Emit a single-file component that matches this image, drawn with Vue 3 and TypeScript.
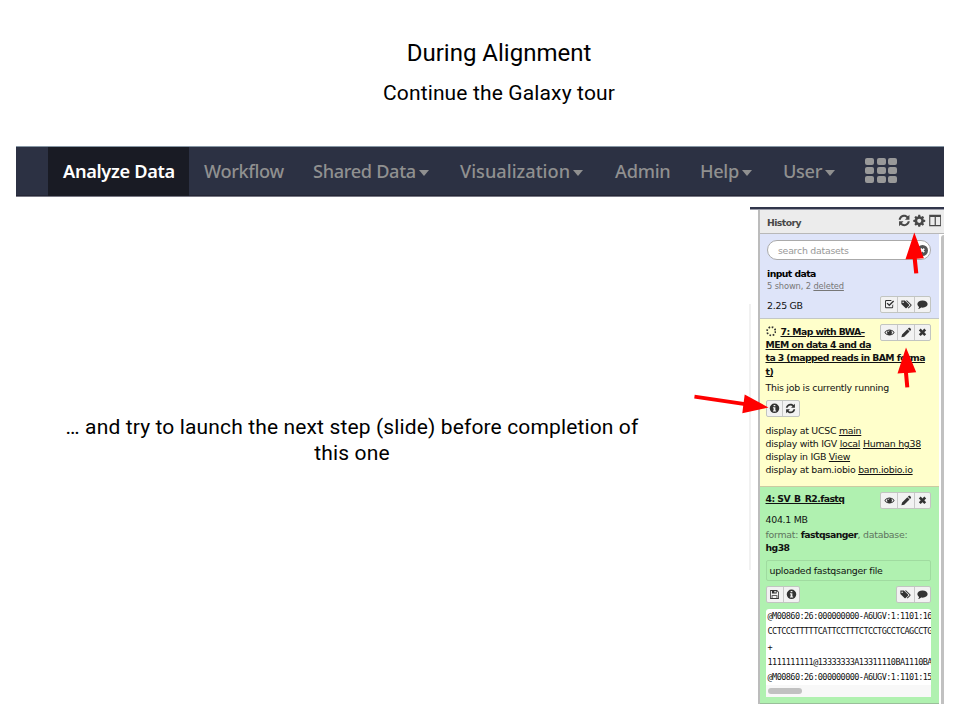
<script setup lang="ts">
import { h, type FunctionalComponent } from 'vue'

interface NavItem { label: string; key: string; menu?: boolean; active?: boolean }

const nav: NavItem[] = [
  { label: 'Analyze Data', key: 'analyze', active: true },
  { label: 'Workflow', key: 'workflow' },
  { label: 'Shared Data', key: 'shared', menu: true },
  { label: 'Visualization', key: 'visualization', menu: true },
  { label: 'Admin', key: 'admin' },
  { label: 'Help', key: 'help', menu: true },
  { label: 'User', key: 'user', menu: true },
]

const icons: Record<string, string> = {
  refresh: 'M.6 6.600C1 3.300 3.800 1 7 1c1.700 0 3.200.7 4.300 1.700L13 1v5.500H7.800l1.900-1.900C9 3.900 8.100 3.300 7 3.300c-2 0-3.600 1.400-4 3.300zM13.400 8.400C13 11.700 10.200 14 7 14c-1.700 0-3.200-.7-4.300-1.700L1 14V8.500h5.200l-1.900 1.900c.7.700 1.600 1.300 2.700 1.300 2 0 3.600-1.400 4-3.300z',
  gear: 'M5.900 1h2.200l.4 1.800 1 .4L11 2.200 12.600 3.800l-1 1.600.4 1 1.900.4v2.200l-1.900.4-.4 1 1 1.500-1.600 1.600-1.500-1-1 .4-.4 1.900H5.900l-.4-1.900-1-.4-1.500 1L1.400 11.900l1-1.500-.4-1L.1 9V6.800L2 6.400l.4-1-1-1.600L3 2.200l1.500 1 1-.4zM7 5.500a2.400 2.400 0 100 4.800 2.400 2.400 0 000-4.800z',
  columns: 'M0 1h14v13H0zM1.300 3.500v9.200h5V3.500zM7.700 3.500v9.200h5V3.500z',
  check: 'M2.500 1.500h7.700l-1.300 1.300H3c-.5 0-.8.300-.8.800v7c0 .5.300.8.800.8h7c.5 0 .8-.3.800-.8V8.500L12 7.300v3.500c0 1.100-.8 1.900-1.900 1.900H2.800C1.700 12.700.9 11.900.9 10.800V3.400c0-1.100.700-1.900 1.600-1.900zM3 6.200l1.300-1.200 2.400 2.300L12 2l1.300 1.300-6.600 6.600z',
  tags: 'M0 2h4.800l5.600 5.600c.5.500.5 1.100 0 1.600l-3.200 3.200c-.5.500-1.100.5-1.600 0L0 6.800zM2.400 3.400a1.100 1.100 0 100 2.200 1.100 1.100 0 000-2.200zM6.100 2h1.800l5.700 5.600c.5.500.5 1.100 0 1.600L9.800 12.900l-.9-.8 3.300-3.300c.3-.3.300-.6 0-.9z',
  comment: 'M7 2c4 0 7 2.100 7 4.900s-3 4.900-7 4.900c-.6 0-1.200 0-1.700-.1C4 12.900 2.400 13.700.9 13.800c.9-.9 1.400-1.900 1.400-3C.9 9.900 0 8.500 0 6.900 0 4.100 3 2 7 2z',
  eye: 'M0 7.500C1.700 4.900 4.200 3.300 7 3.300s5.300 1.600 7 4.200c-1.700 2.600-4.200 4.200-7 4.200S1.700 10.100 0 7.500zM1.400 7.500c1 1.400 2.200 2.400 3.600 2.800A3.600 3.600 0 015 4.700c-1.400.4-2.600 1.400-3.600 2.800zM9 4.700a3.600 3.600 0 010 5.600c1.400-.4 2.600-1.400 3.600-2.800-1-1.400-2.200-2.400-3.600-2.800zM7 4.700A2 2 0 005 6.700h.8c0-.7.5-1.200 1.200-1.200z',
  pencil: 'M1 10.300L8.200 3.100l2.900 2.900L3.900 13.200 0 14.100zM8.900 2.400l1-1c.6-.6 1.300-.6 1.900 0l1 1c.6.6.6 1.300 0 1.900l-1 1z',
  close: 'M2 4.700L4.500 2.200 7 4.800l2.500-2.600L12 4.700 9.400 7.300 12 9.900l-2.500 2.500L7 9.800l-2.500 2.600L2 9.900l2.600-2.600z',
  info: 'M7 .8a6.500 6.500 0 100 13 6.500 6.500 0 000-13zM5.800 2.600h2.400v2H5.800zM4.900 5.700h3.300v4.400h1v1.600H4.900v-1.600h.9V7.200h-.9z',
  save: 'M1 1.500h9.500L13 4v9.500H1zM2.100 2.600v9.800h1V8.500h7.800v3.900h1V4.500L10 2.600V6H3.500V2.600zM6.800 2.600v2.300h2V2.600zM4.200 9.600v2.800h5.600V9.600z',
}

const Icon: FunctionalComponent<{ name: string }> = (props) =>
  h('svg', { viewBox: '0 0 14 15', 'aria-hidden': 'true' }, [
    h('path', { d: icons[props.name], fill: 'currentColor', 'fill-rule': 'evenodd' }),
  ])
Icon.props = ['name']

const sequence: string[] = [
  '@M00860:26:000000000-A6UGV:1:1101:16',
  'CCTCCCTTTTTCATTCCTTTCTCCTGCCTCAGCCTG',
  '+',
  '1111111111@13333333A13311110BA1110BA',
  '@M00860:26:000000000-A6UGV:1:1101:15',
]
</script>

<template>
  <main class="slide">
    <header class="heading">
      <h1>During Alignment</h1>
      <h2>Continue the Galaxy tour</h2>
    </header>

    <nav class="masthead">
      <a v-for="item in nav" :key="item.key" :class="['item', item.key, { active: item.active }]">
        <span>{{ item.label }}</span><i v-if="item.menu" class="caret"></i>
      </a>
      <div class="apps"><i v-for="n in 9" :key="n"></i></div>
    </nav>

    <div class="body">
      <p class="note">… and try to launch the next step (slide) before completion of<br>this one</p>
      <div class="gutter"></div>

      <section class="history">
        <div class="topline"></div>
        <div class="frame">
          <div class="title-bar">
            <b>History</b>
            <span class="tools"><Icon name="refresh" /><Icon name="gear" /><Icon name="columns" /></span>
          </div>
          <div class="scroller">
            <div class="content">
              <div class="summary">
                <div class="search"><span>search datasets</span><i class="clear"><Icon name="close" /></i></div>
                <b class="name">input data</b>
                <div class="count">5 shown, 2 <u>deleted</u></div>
                <div class="size-row">
                  <span>2.25 GB</span>
                  <span class="buttons"><i><Icon name="check" /></i><i><Icon name="tags" /></i><i><Icon name="comment" /></i></span>
                </div>
              </div>

              <article class="dataset running">
                <div class="dataset-head">
                  <b class="title"><svg class="spinner" viewBox="0 0 12 12" aria-hidden="true"><circle cx="6" cy="6" r="4.800" /></svg><u>7: Map with BWA–</u><br><u>MEM on data 4 and da</u></b>
                  <span class="buttons"><i><Icon name="eye" /></i><i><Icon name="pencil" /></i><i><Icon name="close" /></i></span>
                </div>
                <b class="title rest"><u>ta 3 (mapped reads in BAM forma</u><br><u>t)</u></b>
                <p class="state">This job is currently running</p>
                <span class="buttons"><i><Icon name="info" /></i><i><Icon name="refresh" /></i></span>
                <div class="links">
                  <div>display at UCSC <u>main</u></div>
                  <div>display with IGV <u>local</u> <u>Human hg38</u></div>
                  <div>display in IGB <u>View</u></div>
                  <div>display at bam.iobio <u>bam.iobio.io</u></div>
                </div>
              </article>

              <article class="dataset ok">
                <div class="dataset-head">
                  <b class="title"><u>4: SV_B_R2.fastq</u></b>
                  <span class="buttons"><i><Icon name="eye" /></i><i><Icon name="pencil" /></i><i><Icon name="close" /></i></span>
                </div>
                <div class="size">404.1 MB</div>
                <div class="meta">format: <b>fastqsanger</b>, database:<br><b>hg38</b></div>
                <div class="info-box">uploaded fastqsanger file</div>
                <div class="action-row">
                  <span class="buttons"><i><Icon name="save" /></i><i><Icon name="info" /></i></span>
                  <span class="buttons"><i><Icon name="tags" /></i><i><Icon name="comment" /></i></span>
                </div>
                <div class="peek">
                  <div v-for="line in sequence" :key="line" class="line">{{ line }}</div>
                  <div class="track"><i></i></div>
                </div>
              </article>
            </div>
            <div class="scrollbar"></div>
          </div>
        </div>
      </section>
    </div>

    <svg class="arrows" viewBox="0 0 960 720" aria-hidden="true">
      <path d="M914.300 232.500L905.500 259.300 912.700 258.900 914.200 273.500 918.300 273.200 916.800 258.700 923.900 258.300z" />
      <path d="M906 347.500L897.500 373.500 904 373.100 905.300 387.600 909.300 387.300 908 372.900 916.200 372.300z" />
      <path d="M768.500 407.600L744.700 394.500 743.700 401.900 694.700 394.700 694.200 398.400 743.200 405.800 742.300 413.200z" />
    </svg>
  </main>
</template>

<style>
body { background: #fff; }
</style>

<style scoped>
.slide { position: relative; box-sizing: border-box; width: 960px; height: 720px; overflow: hidden; padding: 38px 16px 16px; background: #fff; color: #000; font-family: Roboto, sans-serif; }
.heading { height: 108px; padding-left: 38px; box-sizing: border-box; text-align: center; }
h1, h2, p { margin: 0; font-weight: 400; }
h1 { font-size: 24px; line-height: 30px; }
h2 { margin-top: 10px; font-size: 21px; line-height: 30px; letter-spacing: .14px; }

.masthead { display: flex; box-sizing: border-box; height: 51px; padding-left: 32px; background: #2c3143; border-top: 1px solid #8797a5; border-bottom: 1px solid #777783; box-shadow: inset 0 -1px #242635; font: 500 18.200px "Noto Sans", sans-serif; color: #909090; letter-spacing: -.25px; }
.item { display: flex; align-items: center; box-sizing: border-box; padding: 0 0 1px 15px; white-space: nowrap; }
.item.active { background: #191b24; color: #fff; font-weight: 600; letter-spacing: -.32px; }
.analyze { width: 141px; }
.workflow { width: 109px; letter-spacing: -.35px; }
.shared { width: 147px; }
.visualization { width: 155px; letter-spacing: 0; }
.admin { width: 85px; }
.help { width: 83px; }
.user { width: 80px; }
.shared, .help, .user { letter-spacing: -.35px; }
.caret { margin: 3px 0 0 3px; border: 5.500px solid transparent; border-top: 6px solid #909090; border-bottom: 0; }
.apps { display: grid; grid-template-columns: repeat(3, 9px); grid-auto-rows: 7px; gap: 2.300px 2.500px; align-content: center; padding: 0 0 2px 17px; }
.apps i { background: #999; border-radius: 2px; }

.body { display: flex; height: 507px; }
.note { width: 672px; padding-top: 217px; text-align: center; font-size: 21px; line-height: 26px; letter-spacing: .135px; white-space: nowrap; }
.gutter { width: 2px; height: 266px; margin: 107px 0 0 61px; background: #f1f1f1; }

.history { display: flex; flex-direction: column; width: 194px; margin-left: -1px; padding-top: 10px; font: 9.400px/13px "DejaVu Sans", sans-serif; letter-spacing: -.26px; color: #111; }
.history b { font-size: 9.300px; letter-spacing: -.56px; }
.topline { height: 2px; background: #31364b; border-bottom: 1px solid #999ba8; }
.frame { display: flex; flex: 1; flex-direction: column; min-height: 0; margin-left: 8px; border-left: 2px solid #bcbcbc; }
.title-bar { display: flex; justify-content: space-between; align-items: center; box-sizing: border-box; height: 24px; padding: 1px 3px 0 7px; background: #ececec; border-bottom: 1px solid #b8b8b8; color: #484848; }
.tools { display: flex; gap: 3px; padding-bottom: 4px; }
.tools svg { display: block; width: 12.500px; height: 13px; }
.scroller { display: flex; flex: 1; min-height: 0; }
.content { display: flex; flex-direction: column; width: 179px; }
.scrollbar { flex: 1; margin: 1px 0 0 2px; background: #c1c1c1; border-radius: 3px 0 0; }

.summary { box-sizing: border-box; height: 85px; padding: 6px 8px 0 7px; background: #dee4f9; border-bottom: 1px solid #c3c7c6; }
.search { display: flex; align-items: center; justify-content: space-between; box-sizing: border-box; height: 20px; padding: 0 2px 0 10px; border: 1px solid #aaa; border-radius: 10px; background: #fff; color: #999; }
.clear { display: flex; align-items: center; justify-content: center; width: 11px; height: 11px; border-radius: 50%; background: #555; color: #fff; }
.clear svg { width: 7px; height: 7px; }
.name { display: block; margin-top: 7px; color: #000; }
.count { font-size: 8.300px; line-height: 12px; letter-spacing: -.13px; color: #777; }
.size-row { display: flex; justify-content: space-between; align-items: center; margin-top: 4px; }
.size-row > span:first-child { padding-top: 2px; }

.buttons { display: inline-flex; flex: none; box-sizing: border-box; height: 17px; border: 1px solid #c2c5c1; border-radius: 2px; background: #f2f2f2; color: #333; }
.buttons i { display: flex; align-items: center; justify-content: center; box-sizing: border-box; width: 16.300px; }
.buttons i + i { border-left: 1px solid #c8c8c8; }
.buttons svg { width: 11px; height: 11px; }

.dataset { box-sizing: border-box; padding: 5px 8px 0 5.500px; }
.dataset-head { display: flex; justify-content: space-between; align-items: flex-start; }
.title { display: block; color: #111; white-space: nowrap; line-height: 13.400px; }
.spinner { width: 10.500px; height: 10.500px; margin-right: 4.500px; vertical-align: -2px; fill: none; stroke: #333; stroke-width: 2; stroke-dasharray: 1.900 1.870; }
.running { height: 168px; background: #ffffcb; border-bottom: 1px solid #cccba2; }
.running .dataset-head { height: 26.800px; }
.running .title { padding-top: .6px; }
.state { margin: 3px 0 5px; line-height: 14px; }
.running > .buttons { display: flex; width: 34px; }
.links { margin-top: 7px; white-space: nowrap; }
.ok { flex: 1; background: #b0f1b0; border-bottom: 1px solid #9abf9a; }
.ok .dataset-head { height: 21px; }
.size { line-height: 13px; }
.meta { margin-top: 2px; color: #5f755f; white-space: nowrap; }
.meta b { color: #111; }
.info-box { box-sizing: border-box; height: 21px; margin-top: 6px; padding: 0 3px; border: 1px solid #a0dba0; border-radius: 2px; line-height: 19px; }
.action-row { display: flex; justify-content: space-between; margin-top: 5px; }
.peek { height: 88px; margin-top: 6px; overflow: hidden; border-radius: 3px 3px 0 0; background: #fff; }
.line { height: 15.250px; padding-left: 2px; font: 8.500px/15.250px "DejaVu Sans Mono", monospace; letter-spacing: -.55px; white-space: nowrap; color: #111; }
.track { height: 11.700px; padding: 3px 0 0 2px; box-sizing: border-box; background: #f8f8f8; }
.track i { display: block; width: 34px; height: 6px; border-radius: 3px; background: #c1c1c1; }

.arrows { position: absolute; inset: 0; width: 960px; height: 720px; pointer-events: none; }
.arrows path { fill: #f00; }
</style>
